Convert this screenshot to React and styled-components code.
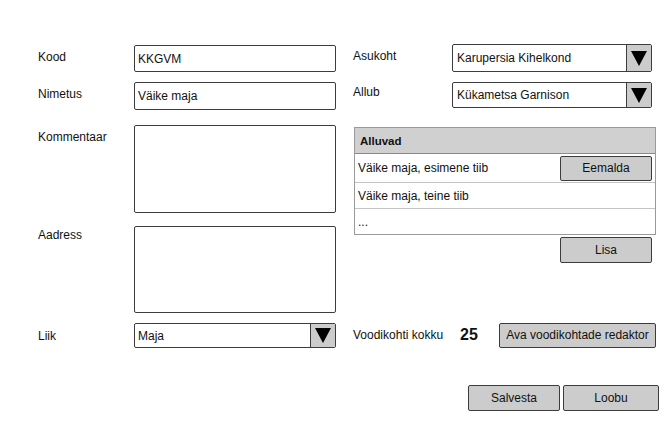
import React from "react";
import styled, { createGlobalStyle } from "styled-components";

const Global = createGlobalStyle`
  html, body { margin: 0; padding: 0; background: #fff; }
  body { font-family: "Liberation Sans", Arial, sans-serif; color: #111; }
`;

const Page = styled.div`
  width: 663px;
  height: 439px;
  box-sizing: border-box;
  padding: 44px 4px 0 38px;
  display: flex;
  flex-direction: column;
  font-size: 12px;
`;

const Top = styled.div`
  display: flex;
  gap: 17px;
  height: 269px;
`;

const Column = styled.div`
  display: flex;
  flex-direction: column;
  width: ${(p) => p.$w}px;
`;

const Row = styled.div`
  display: flex;
  align-items: ${(p) => (p.$center ? "center" : "flex-start")};
  margin-top: ${(p) => p.$mt || 0}px;
`;

const Label = styled.div`
  width: ${(p) => p.$w}px;
  flex: none;
  padding-top: ${(p) => (p.$pt != null ? p.$pt : 4)}px;
  line-height: 16px;
  font-size: 12px;
`;

const Box = styled.div`
  box-sizing: border-box;
  width: ${(p) => p.$w}px;
  height: ${(p) => p.$h}px;
  border: 1.5px solid #3c3c3c;
  border-radius: 2px;
  background: #fff;
  display: flex;
  align-items: center;
  padding-left: ${(p) => p.$pl || 3}px;
  font-size: 12px;
`;

const Area = styled.div`
  box-sizing: border-box;
  width: 202px;
  height: ${(p) => p.$h}px;
  border: 1.5px solid #3c3c3c;
  border-radius: 2px;
  background: #fff;
`;

const Select = styled.div`
  box-sizing: border-box;
  width: ${(p) => p.$w}px;
  height: ${(p) => p.$h}px;
  border: 1.5px solid #3c3c3c;
  border-radius: 2px;
  background: #fff;
  display: flex;
  align-items: stretch;
`;

const SelectText = styled.div`
  flex: 1;
  display: flex;
  align-items: center;
  padding-left: ${(p) => p.$pl || 3}px;
  font-size: 12px;
`;

const Arrow = styled.div`
  width: 24px;
  flex: none;
  background: #cccccc;
  border-left: 1.5px solid #3c3c3c;
  display: flex;
  align-items: center;
  justify-content: center;
`;

const Triangle = styled.div`
  width: 0;
  height: 0;
  border-left: 8px solid transparent;
  border-right: 8px solid transparent;
  border-top: 15px solid #000;
`;

const Table = styled.div`
  box-sizing: border-box;
  width: 302px;
  height: 108px;
  margin-left: 1px;
  margin-top: ${(p) => p.$mt || 0}px;
  border: 1px solid #9a9a9a;
  display: flex;
  flex-direction: column;
`;

const TableHeader = styled.div`
  height: 26px;
  flex: none;
  box-sizing: border-box;
  background: #d0d0d0;
  border-bottom: 1px solid #8a8a8a;
  display: flex;
  align-items: center;
  padding-left: 5px;
  font-weight: bold;
  font-size: 11.5px;
`;

const TableRow = styled.div`
  flex: ${(p) => (p.$last ? 1 : "none")};
  height: ${(p) => (p.$last ? "auto" : `${p.$h}px`)};
  box-sizing: border-box;
  border-bottom: ${(p) => (p.$last ? "none" : "1px solid #c4c4c4")};
  display: flex;
  align-items: center;
  justify-content: space-between;
  padding: 0 3px 0 3px;
  font-size: 12px;
`;

const Button = styled.div`
  box-sizing: border-box;
  width: ${(p) => p.$w}px;
  height: ${(p) => p.$h || 26}px;
  background: #cccccc;
  border: 1.5px solid #3c3c3c;
  border-radius: 2px;
  display: flex;
  align-items: center;
  justify-content: center;
  font-size: 12px;
  align-self: ${(p) => p.$self || "auto"};
  margin-top: ${(p) => p.$mt || 0}px;
  margin-right: ${(p) => p.$mr || 0}px;
`;

const BottomRow = styled.div`
  display: flex;
  gap: 17px;
  margin-top: 10px;
`;

const Count = styled.div`
  width: 39px;
  font-weight: bold;
  font-size: 16px;
`;

const Footer = styled.div`
  display: flex;
  justify-content: flex-end;
  gap: 3px;
  margin-top: 37px;
`;

export default function App() {
  return (
    <>
      <Global />
      <Page>
        <Top>
          <Column $w={298}>
            <Row $mt={1}>
              <Label $w={96}>Kood</Label>
              <Box $w={202} $h={27}>KKGVM</Box>
            </Row>
            <Row $mt={10}>
              <Label $w={96}>Nimetus</Label>
              <Box $w={202} $h={28}>Väike maja</Box>
            </Row>
            <Row $mt={15}>
              <Label $w={96} $pt={4}>Kommentaar</Label>
              <Area $h={88} />
            </Row>
            <Row $mt={13}>
              <Label $w={96} $pt={1}>Aadress</Label>
              <Area $h={87} />
            </Row>
          </Column>
          <Column $w={303}>
            <Row>
              <Label $w={99}>Asukoht</Label>
              <Select $w={200} $h={28}>
                <SelectText $pl={4}>Karupersia Kihelkond</SelectText>
                <Arrow><Triangle /></Arrow>
              </Select>
            </Row>
            <Row $mt={10}>
              <Label $w={99} $pt={2}>Allub</Label>
              <Select $w={200} $h={26}>
                <SelectText $pl={4}>Kükametsa Garnison</SelectText>
                <Arrow><Triangle /></Arrow>
              </Select>
            </Row>
            <Table $mt={19}>
              <TableHeader>Alluvad</TableHeader>
              <TableRow $h={29}>
                <span>Väike maja, esimene tiib</span>
                <Button $w={92} $h={25}>Eemalda</Button>
              </TableRow>
              <TableRow $h={26}>
                <span>Väike maja, teine tiib</span>
              </TableRow>
              <TableRow $last>
                <span>...</span>
              </TableRow>
            </Table>
            <Button $w={92} $h={26} $self="flex-end" $mt={2} $mr={4}>Lisa</Button>
          </Column>
        </Top>
        <BottomRow>
          <Row style={{ width: 298 }}>
            <Label $w={96} $pt={5}>Liik</Label>
            <Select $w={202} $h={25}>
              <SelectText>Maja</SelectText>
              <Arrow><Triangle /></Arrow>
            </Select>
          </Row>
          <Row $center $mt={-1}>
            <Label $w={107} $pt={0}>Voodikohti kokku</Label>
            <Count>25</Count>
            <Button $w={157} $h={25}>Ava voodikohtade redaktor</Button>
          </Row>
        </BottomRow>
        <Footer>
          <Button $w={92} $h={26}>Salvesta</Button>
          <Button $w={96} $h={26}>Loobu</Button>
        </Footer>
      </Page>
    </>
  );
}
